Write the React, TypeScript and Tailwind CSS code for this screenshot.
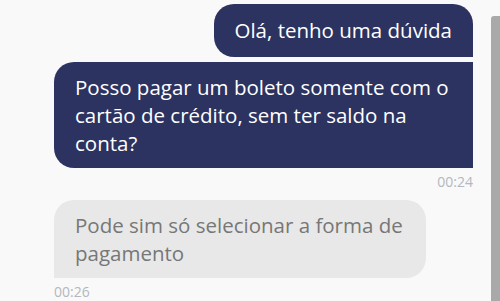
export default function App() {
  const font = { fontFamily: '"Open Sans", "Noto Sans", sans-serif' };
  return (
    <div className="w-[500px] h-[301px] bg-[#f9f9f9] flex overflow-hidden" style={font}>
      <div className="flex-1 flex flex-col pl-[54px] pr-[18px] pt-[4px]">
        <div className="self-end bg-[#2c3361] text-white text-[20.5px] leading-[29px] px-[21px] py-[12px] rounded-t-[20px] rounded-bl-[20px]">
          Olá, tenho uma dúvida
        </div>
        <div className="mt-[5px] self-end w-[419px] bg-[#2c3361] text-white text-[20.5px] leading-[28px] pl-[21px] pr-[18px] py-[11px] rounded-tl-[20px] rounded-bl-[20px]">
          Posso pagar um boleto somente com o cartão de crédito, sem ter saldo na conta?
        </div>
        <div className="self-end mt-[6px] text-[14px] leading-[16px] text-[#b3b7be]">00:24</div>
        <div className="mt-[10px] self-start w-[372px] bg-[#e8e8e8] text-[#777777] text-[20.5px] leading-[28px] pl-[21px] pr-[18px] py-[11px] rounded-t-[20px] rounded-br-[20px]">
          Pode sim só selecionar a forma de pagamento
        </div>
        <div className="self-start mt-[6px] text-[14px] leading-[16px] text-[#b3b7be]">00:26</div>
      </div>
      <div className="w-[9px] mt-[16px] bg-[#a9a9a9] rounded-tl-[3px]" />
    </div>
  );
}
